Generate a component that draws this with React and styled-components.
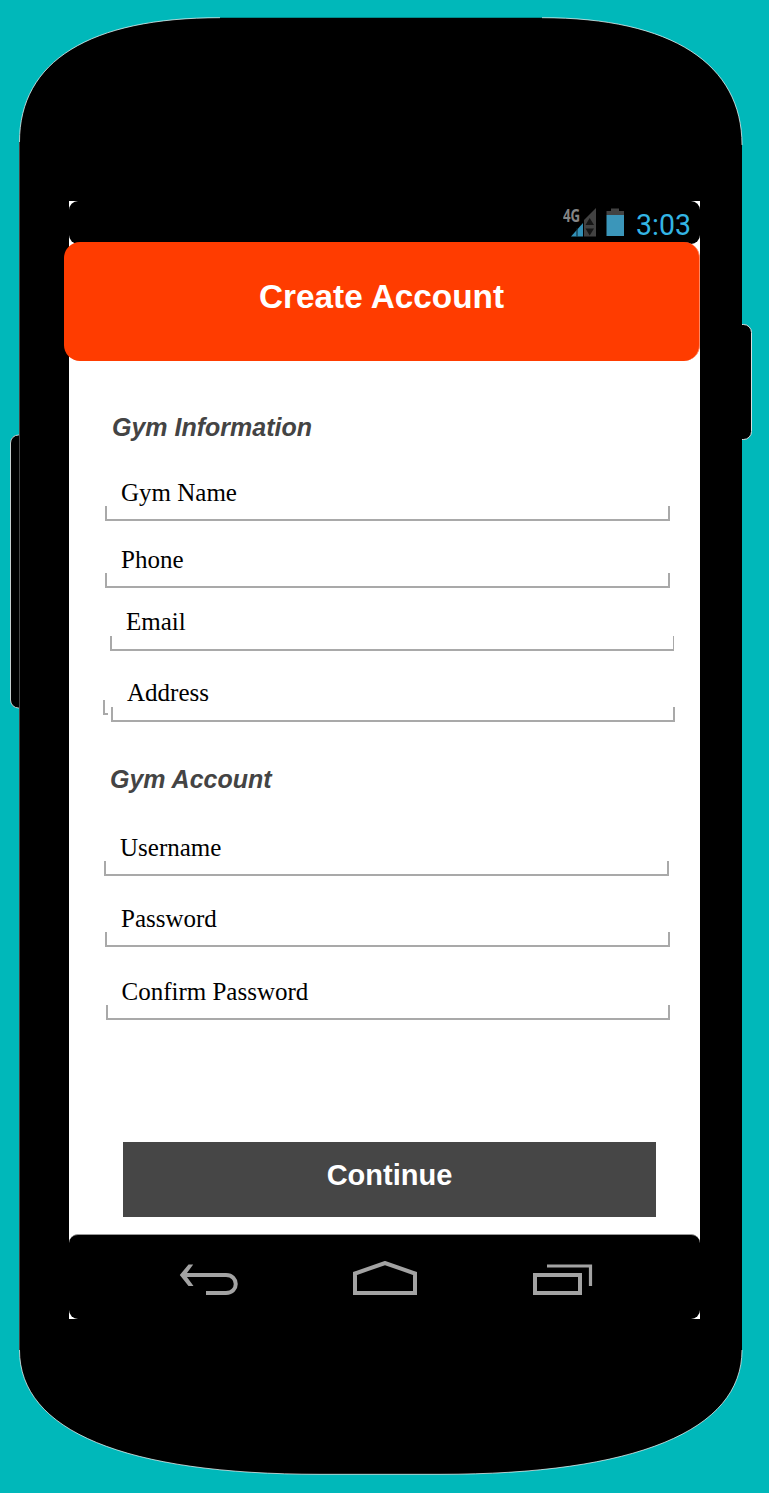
import React from "react";
import styled, { createGlobalStyle } from "styled-components";

const GlobalStyle = createGlobalStyle`
  *, *::before, *::after { box-sizing: border-box; }
  body { margin: 0; background: #00b8ba; }
`;

const Page = styled.main`
  position: relative;
  isolation: isolate;
  width: 769px;
  height: 1493px;
  padding: 201px 69px 0;
  background: #00b8ba;
  overflow: hidden;
`;

const DeviceArt = styled.svg`
  position: absolute;
  inset: 0;
  z-index: -1;
  display: block;
`;

const Screen = styled.div`
  display: flex;
  flex-direction: column;
  width: 631px;
  height: 1118px;
  background: #fff;
`;

const StatusBar = styled.div`
  display: flex;
  flex: none;
  align-items: center;
  justify-content: flex-end;
  height: 43px;
  padding-right: 8px;
  border-radius: 9px;
  background: #000;
`;

const Network = styled.span`
  align-self: flex-start;
  width: 18px;
  margin: 4px -11px 0 0;
  font: 700 17.5px/20px "Open Sans", sans-serif;
  color: #858585;
  transform: scaleX(0.76);
  transform-origin: left;
  z-index: 1;
`;

const StatusIcons = styled.svg`
  display: block;
  flex: none;
`;

const Clock = styled.time`
  flex: none;
  width: 56px;
  margin-left: 9px;
  padding-top: 4px;
  font: 400 29.5px/40px Roboto, sans-serif;
  white-space: nowrap;
  color: #33b5e5;
  transform: scaleX(0.965);
  transform-origin: left;
`;

const Header = styled.header`
  flex: none;
  height: 119px;
  margin: -2px 0 0 -5px;
  padding-top: 35px;
  border-radius: 16px;
  background: #ff3c00;
  border-right: 1px solid #ff8760;
  text-align: center;
`;

const Title = styled.h1`
  margin: 0;
  font: 700 33.35px/40px "Liberation Sans", Arial, sans-serif;
  color: #fff;
`;

const Form = styled.form`
  display: flex;
  flex-direction: column;
  flex: 1;
  padding-top: 52px;
`;

const SectionTitle = styled.h2`
  margin: ${({ $top }) => $top}px 0 0 ${({ $left }) => $left}px;
  font: italic 700 25px/28px "Liberation Sans", Arial, sans-serif;
  color: #444;
`;

const Field = styled.label`
  display: block;
  position: relative;
  width: ${({ $width }) => $width}px;
  margin: ${({ $top }) => $top}px 0 0 ${({ $left }) => $left}px;
`;

const FieldLabel = styled.span`
  display: block;
  padding-left: ${({ $inset }) => $inset}px;
  font: 400 25px/28px "Liberation Serif", "Times New Roman", serif;
  color: #000;
`;

const Underline = styled.span`
  display: block;
  height: 15px;
  margin-top: ${({ $gap = -1 }) => $gap}px;
  border: 2px solid #a9a9a9;
  border-top: 0;
  border-right-width: ${({ $thin }) => ($thin ? 1 : 2)}px;
`;

const StrayTick = styled.span`
  position: absolute;
  left: -8px;
  bottom: 7px;
  width: 5px;
  height: 15px;
  border: solid #a9a9a9;
  border-width: 0 0 2px 2px;
`;

const ContinueButton = styled.button`
  width: 533px;
  height: 75px;
  margin: 122px 0 0 54px;
  padding: 0 0 10px;
  border: 0;
  background: #464646;
  color: #fff;
  font: 700 29px/34px "Liberation Sans", Arial, sans-serif;
`;

const NavBar = styled.nav`
  display: flex;
  flex: none;
  align-items: flex-start;
  height: 85px;
  padding: 26px 0 0 110px;
  border-top: 1px solid #999;
  border-radius: 9px;
  background: #000;
`;

const NavIcon = styled.svg`
  flex: none;
  display: block;
  margin-right: ${({ $gap }) => $gap || 0}px;
  fill: none;
  stroke: #a3a3a3;
`;

const gymFields = [
  { label: "Gym Name", top: 38, left: 36, width: 565, inset: 16 },
  { label: "Phone", top: 25, left: 36, width: 565, inset: 16 },
  { label: "Email", top: 20, left: 41, width: 564, inset: 16, gap: 0, thin: true },
  { label: "Address", top: 28, left: 42, width: 564, inset: 16, gap: 0, stray: true },
];

const accountFields = [
  { label: "Username", top: 41, left: 35, width: 565, inset: 16 },
  { label: "Password", top: 29, left: 36, width: 565, inset: 16 },
  { label: "Confirm Password", top: 31, left: 37, width: 564, inset: 15.5 },
];

function TextField({ label, top, left, width, inset, gap, thin, stray }) {
  return (
    <Field $top={top} $left={left} $width={width}>
      <FieldLabel $inset={inset}>{label}</FieldLabel>
      <Underline $gap={gap} $thin={thin} />
      {stray && <StrayTick />}
    </Field>
  );
}

export default function App() {
  return (
    <>
      <GlobalStyle />
      <Page>
        <DeviceArt width="769" height="1493" viewBox="0 0 769 1493" aria-hidden="true">
          <rect x="10.5" y="435" width="30" height="273" rx="8" stroke="#ddd" strokeWidth="0.9" />
          <rect x="720" y="324.5" width="31.5" height="115" rx="8" stroke="#eee" strokeWidth="0.9" />
          <path d="M19.5 142C19.5 61 90 17.7 220 17.7H542C672 17.7 742 64 742 145V1350C742 1431 635 1474.3 440 1474.3H320C125 1474.3 19.5 1431 19.5 1350Z" />
          <path
            d="M19.5 142C19.5 61 90 17.7 220 17.7M542 17.7C672 17.7 742 64 742 145M742 1350C742 1431 635 1474.3 440 1474.3H320C125 1474.3 19.5 1431 19.5 1350"
            fill="none"
            stroke="#fff"
            strokeWidth="0.7"
          />
          <path d="M19.5 142V1350" stroke="#444" strokeWidth="1" />
        </DeviceArt>
        <Screen>
          <StatusBar>
            <Network>4G</Network>
            <StatusIcons width="57" height="32" viewBox="570 207 57 32">
              <path d="M584 220L596 208V236.5H584Z" fill="#424242" />
              <path d="M571 236.5L583 223V236.5Z" fill="#3191b8" />
              <path d="M577 228V236.5" stroke="#08202a" />
              <path d="M585.5 225L589.7 218L594 225ZM585.5 228.5H594L589.7 235.5Z" fill="#151515" />
              <path d="M606.5 211H611V208.5H619V211H624V215H606.5Z" fill="#424242" />
              <path d="M606.5 215H624V236H606.5Z" fill="#3b96ba" />
            </StatusIcons>
            <Clock>3:03</Clock>
          </StatusBar>
          <Header>
            <Title>Create Account</Title>
          </Header>
          <Form onSubmit={(e) => e.preventDefault()}>
            <SectionTitle $top={0} $left={43}>Gym Information</SectionTitle>
            {gymFields.map((f) => <TextField key={f.label} {...f} />)}
            <SectionTitle $top={43} $left={41}>Gym Account</SectionTitle>
            {accountFields.map((f) => <TextField key={f.label} {...f} />)}
            <ContinueButton>Continue</ContinueButton>
          </Form>
          <NavBar>
            <NavIcon width="60" height="36" viewBox="179 1261 60 36" $gap={114}>
              <path d="M183 1275H226C239 1275 239 1293 226 1293H206" strokeWidth="4" />
              <path d="M188.5 1264.5H193.2L185.5 1275L193.5 1286H188.5L179.8 1275Z" fill="#a3a3a3" stroke="none" />
            </NavIcon>
            <NavIcon width="64" height="36" viewBox="353 1261 64 36" $gap={116}>
              <path d="M355 1293V1273.5L385 1263L415 1273.5V1293Z" strokeWidth="4" />
            </NavIcon>
            <NavIcon width="60" height="36" viewBox="533 1261 60 36">
              <path d="M535 1275H580V1293H535Z" strokeWidth="4" />
              <path d="M547 1266H590.5V1286" strokeWidth="3.2" />
            </NavIcon>
          </NavBar>
        </Screen>
      </Page>
    </>
  );
}
